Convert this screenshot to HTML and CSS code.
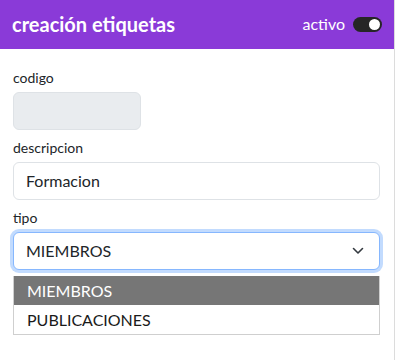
FILE: index.html
```html
<!DOCTYPE html>
<html lang="es">
<head>
<meta charset="utf-8">
<title>creación etiquetas</title>
<link rel="stylesheet" href="styles.css">
</head>
<body>
<div class="card">
  <div class="card-header">
    <h5 class="title">creación etiquetas</h5>
    <label class="switch">
      <span class="switch-label">activo</span>
      <span class="switch-track"><span class="switch-knob"></span></span>
    </label>
  </div>
  <div class="card-body">
    <div class="field">
      <label class="form-label">codigo</label>
      <div class="form-control readonly"></div>
    </div>
    <div class="field">
      <label class="form-label">descripcion</label>
      <div class="form-control">Formacion</div>
    </div>
    <div class="field select-field">
      <label class="form-label">tipo</label>
      <div class="form-control select focused">
        <span>MIEMBROS</span>
        <svg class="chevron" width="12" height="8" viewBox="0 0 12 8"><path d="M1.5 1.5 6 6l4.5-4.5" fill="none" stroke="#343a40" stroke-width="1.6" stroke-linecap="round" stroke-linejoin="round"/></svg>
      </div>
      <ul class="dropdown">
        <li class="option selected">MIEMBROS</li>
        <li class="option">PUBLICACIONES</li>
      </ul>
    </div>
  </div>
</div>
</body>
</html>
```

FILE: styles.css
```css
html, body {
  margin: 0;
  padding: 0;
  background: #fff;
}
body {
  font-family: "Segoe UI", Lato, "Liberation Sans", sans-serif;
  color: #212529;
  width: 399px;
  height: 360px;
  overflow: hidden;
}
.card {
  width: 395px;
  height: 360px;
  border-right: 1px solid #dcdcdc;
  box-sizing: border-box;
}
.card-header {
  height: 49px;
  background: #8a3ad8;
  display: flex;
  align-items: center;
  justify-content: space-between;
  padding: 0 12px 0 12px;
  box-sizing: border-box;
}
.title {
  margin: 0;
  color: #fff;
  font-size: 20px;
  font-weight: 700;
  line-height: 24px;
  padding-bottom: 2px;
}
.switch {
  display: flex;
  align-items: center;
  gap: 8px;
  color: #fff;
  font-size: 16px;
}
.switch-label {
  line-height: 20px;
  padding-bottom: 2px;
}
.switch-track {
  width: 29px;
  height: 15px;
  border-radius: 8px;
  background: #262626;
  display: flex;
  align-items: center;
  justify-content: flex-end;
  padding: 0 2px;
  box-sizing: border-box;
}
.switch-knob {
  width: 11px;
  height: 11px;
  border-radius: 50%;
  background: #fff;
}
.card-body {
  padding: 19px 14px 0 13px;
}
.field {
  margin-bottom: 8px;
}
.form-label {
  display: block;
  font-size: 14px;
  line-height: 20px;
  margin-bottom: 4px;
}
.form-control {
  height: 38px;
  box-sizing: border-box;
  border: 1px solid #dee2e6;
  border-radius: 6px;
  padding: 0 12px;
  font-size: 16px;
  line-height: 36px;
  background: #fff;
}
.readonly {
  width: 128px;
  background: #e9ecef;
}
.select {
  display: flex;
  align-items: center;
  justify-content: space-between;
  padding-right: 15px;
}
.focused {
  border-color: #86b7fe;
  box-shadow: 0 0 0 3px rgba(13, 110, 253, 0.25);
}
.chevron {
  display: block;
}
.dropdown {
  list-style: none;
  margin: 6px 0 0 0;
  padding: 0;
  border: 1px solid #cfcfcf;
  border-top: none;
}
.option {
  height: 29px;
  line-height: 29px;
  padding-left: 13px;
  font-size: 16px;
  color: #1a1a1a;
}
.option.selected {
  background: #767676;
  color: #fff;
}
```
